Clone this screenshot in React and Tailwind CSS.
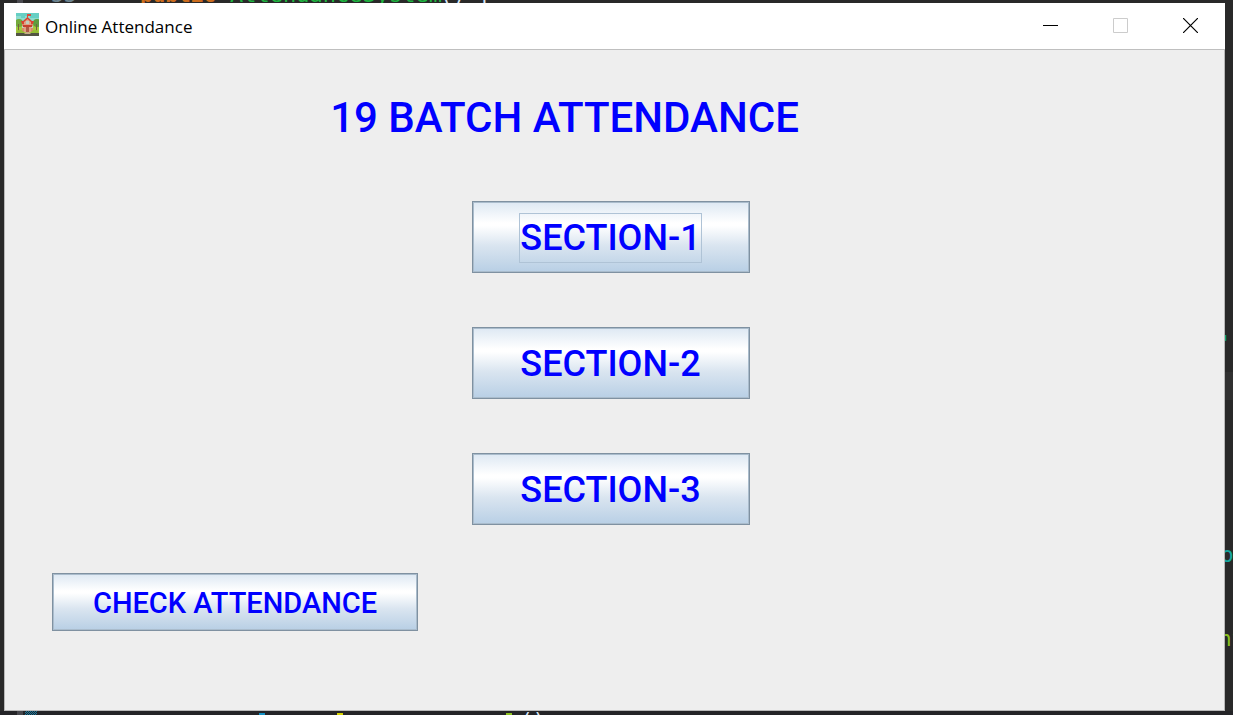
import React from "react";

const sections = ["SECTION-1", "SECTION-2", "SECTION-3"];

const metal =
  "border border-[#7f91a1] shadow-[inset_0_0_0_1px_#aabccc] bg-[linear-gradient(to_bottom,#dde8f3_0%,#ffffff_30%,#ffffff_34%,#dae5f0_62%,#b8cfe5_100%)] font-['Roboto',sans-serif] font-medium text-[#0000ff] outline-none";

function EditorBackdrop() {
  return (
    <div
      aria-hidden="true"
      className="absolute inset-0 flex flex-col justify-between overflow-hidden whitespace-pre bg-[#292929] font-['DejaVu_Sans_Mono',monospace] text-[21px] leading-6"
    >
      <div className="flex h-[3px] items-end pl-[17px]">
        <span className="h-[3px] w-[6px] bg-[#4a4a50]" />
        <span className="h-2 w-[117px] pl-7 leading-[0px] text-[#6d8591]">33</span>
        <span className="h-2 w-[90px] font-bold leading-[0px] text-[#cc6c1d]">public</span>
        <span className="h-2 w-[210px] text-[22px] leading-[0px] text-[#1eb540]">AttendanceSystem</span>
        <span className="h-2 leading-[0px] text-[#d9e8f7]">() {"{"}</span>
      </div>
      <div className="flex w-[14px] grow flex-col self-end pt-[329px]">
        <span className="h-10 text-[#12a37a]">'</span>
        <span className="ml-[6px] h-7 w-2 bg-[#303030]" />
        <span className="pl-[2px] pt-[143px] text-[#16a8a0]">o</span>
        <span className="pt-[60px] text-[#8cc21f]">nt</span>
      </div>
      <div className="flex h-1 items-end bg-[#242427] pl-[17px]">
        <span className="h-1 w-[6px] bg-[#46464c]" />
        <span className="ml-[2px] h-1 w-3 bg-[repeating-conic-gradient(#1479a0_0_25%,#242427_0_50%)] bg-[length:2px_2px]" />
        <span className="ml-[222px] h-[2px] w-[6px] bg-[#1290c3]" />
        <span className="ml-[72px] h-[2px] w-[6px] bg-[#d6d200]" />
        <span className="ml-[163px] h-[2px] w-[6px] bg-[#8cc21f]" />
        <span className="ml-2 h-[6px] text-[#d9e8f7]">()</span>
      </div>
    </div>
  );
}

function SchoolIcon() {
  return (
    <svg viewBox="0 0 23 23" className="size-[23px]" aria-hidden="true">
      <rect width="23" height="23" fill="#67cfc4" />
      <path d="M0 3h5v2h4V3h5v2h9v8H0z" fill="#8bdccf" />
      <path d="M0 14l5-3 6 3 6-3 6 3v7H0z" fill="#a4ca3c" />
      <circle cx="3" cy="10" r="4" fill="#73a93c" />
      <circle cx="21" cy="10" r="4" fill="#5d9d3e" />
      <path d="M2 11h1v7H2zM20 11h1v7h-1z" fill="#76613c" />
      <path d="M6 11h11v8H6z" fill="#d98a68" />
      <path d="M5 8h13l-1 3H6z" fill="#d9432f" />
      <path d="M8 8l3.500-3L15 8v11H8z" fill="#e0a184" />
      <path d="M7 8l4.500-4L16 8l-1 1-3.500-3L8 9z" fill="#d64231" />
      <path d="M11 1h1v4h-1zM12 1h3v2h-3z" fill="#dc4b3b" />
      <path d="M10 8h3v3h-3zM6 13h2v2H6zM15 13h2v2h-2z" fill="#bfd0bd" />
      <path d="M10 14h3v6h-3z" fill="#ae5944" />
      <path d="M7 12h9v2H7z" fill="#c6402d" />
      <path d="M1 18q3-3 7 1v2H1zM15 19q3-4 7-1v3h-7z" fill="#95bd35" />
      <path d="M0 20h23v3H0z" fill="#535443" />
      <path d="M10 19h3l2 2H8z" fill="#c7aa85" />
    </svg>
  );
}

function TitleBar() {
  return (
    <header className="flex h-[47px] shrink-0 items-center border-b border-[#bfbfbf] bg-white pl-3">
      <div className="flex grow items-center gap-[6px] pb-1">
        <SchoolIcon />
        <span className="pt-[6px] font-['Open_Sans',sans-serif] text-[17px] leading-6 text-black">
          Online Attendance
        </span>
      </div>
      <div className="flex h-full pb-[2px]">
        <button type="button" aria-label="Minimize" className="flex w-[70px] items-center justify-center">
          <svg viewBox="0 0 15 15" className="size-[15px]" shapeRendering="crispEdges">
            <path d="M0 7h15v1H0z" fill="#000" />
          </svg>
        </button>
        <button type="button" aria-label="Maximize" disabled className="flex w-[70px] items-center justify-center">
          <svg viewBox="0 0 15 15" className="size-[15px]">
            <path d="M.5.5h14v14H.5z" fill="none" stroke="#cccccc" />
          </svg>
        </button>
        <button type="button" aria-label="Close" className="flex w-[70px] items-center justify-center">
          <svg viewBox="0 0 15 15" className="size-[15px]">
            <path d="M0 0l15 15M15 0L0 15" fill="none" stroke="#000" strokeWidth="1.200" />
          </svg>
        </button>
      </div>
    </header>
  );
}

export default function App() {
  return (
    <div className="relative flex min-h-screen flex-col pb-1 pl-1 pr-2 pt-[3px]">
      <EditorBackdrop />
      <div className="relative flex grow flex-col bg-[#eeeeee]">
        <TitleBar />
        <main className="flex grow flex-col border-x border-b border-[#b8b8b8] pb-8 pt-10">
          <h1 className="pr-[100px] text-center font-['Roboto',sans-serif] text-[42px] font-medium leading-[56px] text-[#0000ff]">
            19 BATCH ATTENDANCE
          </h1>
          <div className="flex flex-col items-center gap-[54px] pr-2 pt-[55px]">
            {sections.map((name, i) => (
              <button key={name} type="button" className={`${metal} flex h-[72px] w-[278px] items-center justify-center pt-[2px] text-[36px] leading-[48px]`}>
                <span className={`border ${i === 0 ? "border-[#afc3d6]" : "border-transparent"}`}>{name}</span>
              </button>
            ))}
          </div>
          <button type="button" className={`${metal} ml-[47px] mt-12 flex h-[58px] w-[366px] items-center justify-center self-start pt-[2px] text-[29px] leading-9`}>
            CHECK ATTENDANCE
          </button>
        </main>
      </div>
    </div>
  );
}
